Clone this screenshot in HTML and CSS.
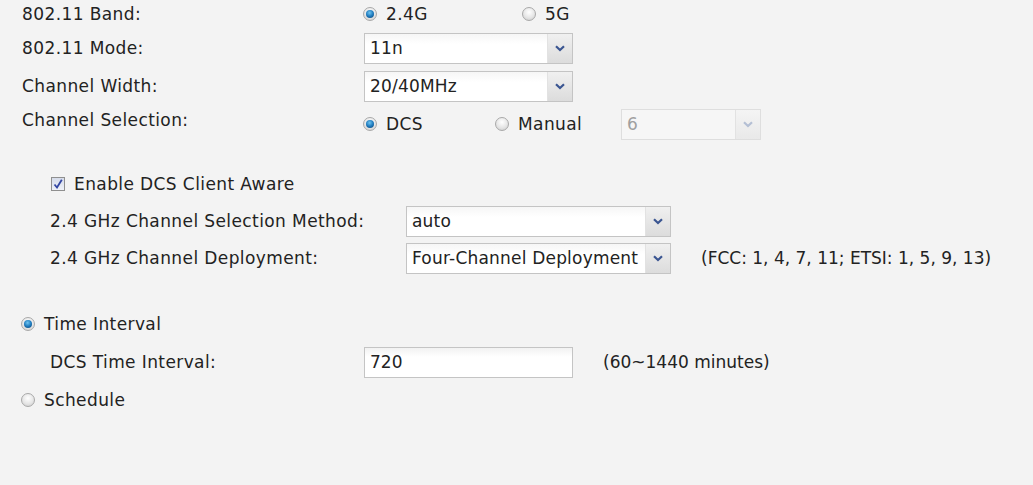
FILE: index.html
```html
<!DOCTYPE html>
<html lang="en">
  <head>
    <meta charset="UTF-8" />
    <meta name="viewport" content="width=device-width, initial-scale=1.0" />
    <title>Wireless Settings</title>
    <link rel="stylesheet" href="styles.css">
  </head>

  <body>
    <form class="wlan-form">
      <div class="row row-band">
        <span class="label">802.11 Band:</span>
        <label class="radio-opt band-opt"><span class="radio checked"></span>2.4G</label>
        <label class="radio-opt"><span class="radio"></span>5G</label>
      </div>

      <div class="row">
        <span class="label">802.11 Mode:</span>
        <div class="select">
          <span class="value">11n</span>
          <span class="arrow"><svg width="10" height="7" viewBox="0 0 10 7"><path d="M1 1.2 L5 5 L9 1.2" fill="none" stroke="#3a5591" stroke-width="2.2"/></svg></span>
        </div>
      </div>

      <div class="row">
        <span class="label">Channel Width:</span>
        <div class="select">
          <span class="value">20/40MHz</span>
          <span class="arrow"><svg width="10" height="7" viewBox="0 0 10 7"><path d="M1 1.2 L5 5 L9 1.2" fill="none" stroke="#3a5591" stroke-width="2.2"/></svg></span>
        </div>
      </div>

      <div class="row">
        <span class="label label-high">Channel Selection:</span>
        <label class="radio-opt dcs-opt"><span class="radio checked"></span>DCS</label>
        <label class="radio-opt manual-opt"><span class="radio"></span>Manual</label>
        <div class="select select-small disabled">
          <span class="value">6</span>
          <span class="arrow"><svg width="10" height="7" viewBox="0 0 10 7"><path d="M1 1.2 L5 5 L9 1.2" fill="none" stroke="#b4bfd4" stroke-width="2.2"/></svg></span>
        </div>
      </div>

      <div class="dcs-options">
        <div class="row">
          <label class="check-opt">
            <span class="checkbox"><svg width="12" height="12" viewBox="0 0 12 12"><path d="M2.5 6.5 L5 9.5 L9.8 1.8" fill="none" stroke="#3346a3" stroke-width="1.8"/></svg></span>
            Enable DCS Client Aware
          </label>
        </div>

        <div class="row">
          <span class="label label-wide">2.4 GHz Channel Selection Method:</span>
          <div class="select select-wide">
            <span class="value">auto</span>
            <span class="arrow"><svg width="10" height="7" viewBox="0 0 10 7"><path d="M1 1.2 L5 5 L9 1.2" fill="none" stroke="#3a5591" stroke-width="2.2"/></svg></span>
          </div>
        </div>

        <div class="row">
          <span class="label label-wide">2.4 GHz Channel Deployment:</span>
          <div class="select select-wide">
            <span class="value">Four-Channel Deployment</span>
            <span class="arrow"><svg width="10" height="7" viewBox="0 0 10 7"><path d="M1 1.2 L5 5 L9 1.2" fill="none" stroke="#3a5591" stroke-width="2.2"/></svg></span>
          </div>
          <span class="note">(FCC: 1, 4, 7, 11; ETSI: 1, 5, 9, 13)</span>
        </div>
      </div>

      <div class="interval">
        <div class="row">
          <label class="radio-opt"><span class="radio checked"></span>Time Interval</label>
        </div>
        <div class="row">
          <span class="label label-indent">DCS Time Interval:</span>
          <input class="text-input" type="text" value="720" />
          <span class="note">(60~1440 minutes)</span>
        </div>
        <div class="row">
          <label class="radio-opt"><span class="radio"></span>Schedule</label>
        </div>
      </div>
    </form>
  </body>
</html>
```

FILE: styles.css
```css
body {
  font-family: "Century Gothic", "DejaVu Sans", sans-serif;
  font-size: 17px;
  letter-spacing: 0.4px;
  color: #222;
  margin: 0;
  padding: 0;
  background-color: #f3f3f3;
}

.wlan-form {
  display: flex;
  flex-direction: column;
  gap: 4px;
  padding-left: 22px;
}

.row {
  display: flex;
  align-items: center;
  height: 34px;
}

.row-band {
  height: 27px;
}

.label {
  width: 342px;
  flex-shrink: 0;
  white-space: nowrap;
}

.label-high {
  align-self: flex-start;
  padding-top: 3px;
}

.label-wide {
  width: 356px;
}

.label-indent {
  width: 314px;
  margin-left: 28px;
}

/* radio buttons */
.radio-opt {
  display: flex;
  align-items: center;
  gap: 9px;
  margin-left: -1px;
  white-space: nowrap;
}

.band-opt {
  width: 160px;
}

.dcs-opt {
  width: 133px;
}

.manual-opt {
  width: 126px;
}

.radio {
  width: 14px;
  height: 14px;
  flex-shrink: 0;
  border-radius: 50%;
  box-sizing: border-box;
  border: 1px solid #a9a9a9;
  background: radial-gradient(circle at 50% 35%, #ffffff 0%, #e6e6e6 55%, #c9c9c9 100%);
  position: relative;
}

.radio.checked::after {
  content: "";
  position: absolute;
  left: 2px;
  top: 2px;
  width: 8px;
  height: 8px;
  border-radius: 50%;
  background: radial-gradient(circle at 45% 35%, #6fc4f0 0%, #1f7cbf 50%, #0d3f6e 100%);
}

/* checkbox */
.check-opt {
  display: flex;
  align-items: center;
  gap: 9px;
  margin-left: 29px;
}

.checkbox {
  width: 14px;
  height: 14px;
  box-sizing: border-box;
  border: 1px solid #8f8f8f;
  background: linear-gradient(#d6dcea, #eef1f8);
  display: flex;
  align-items: center;
  justify-content: center;
}

/* dropdowns */
.select {
  width: 209px;
  height: 31px;
  box-sizing: border-box;
  border: 1px solid #c4c4c4;
  background: linear-gradient(#f6f6f6, #ffffff 35%);
  display: flex;
  align-items: center;
  flex-shrink: 0;
}

.select .value {
  flex: 1;
  padding-left: 5px;
  white-space: nowrap;
  overflow: hidden;
  letter-spacing: 0.2px;
}

.select .arrow {
  width: 24px;
  height: 100%;
  flex-shrink: 0;
  display: flex;
  align-items: center;
  justify-content: center;
  background: linear-gradient(#f0f0f0, #dcdcdc);
  border-left: 1px solid #e2e2e2;
}

.select-small {
  width: 140px;
}

.select-wide {
  width: 265px;
}

.disabled {
  border-color: #dedede;
  color: #a0a0a0;
  background: #f6f6f6;
}

.disabled .arrow {
  background: linear-gradient(#f4f4f4, #e9e9e9);
}

.dcs-options {
  display: flex;
  flex-direction: column;
  gap: 3px;
  margin-top: 22px;
}

.dcs-options .row {
  padding-left: 28px;
}

.dcs-options .row:first-child {
  padding-left: 0;
}

.note {
  margin-left: 30px;
  white-space: nowrap;
  letter-spacing: 0;
}

.interval {
  display: flex;
  flex-direction: column;
  gap: 4px;
  margin-top: 28px;
}

.text-input {
  width: 209px;
  height: 31px;
  box-sizing: border-box;
  border: 1px solid #c4c4c4;
  background: linear-gradient(#f2f2f2, #ffffff 30%);
  font: inherit;
  color: inherit;
  padding: 0 5px;
  margin: 0;
  flex-shrink: 0;
}
```
